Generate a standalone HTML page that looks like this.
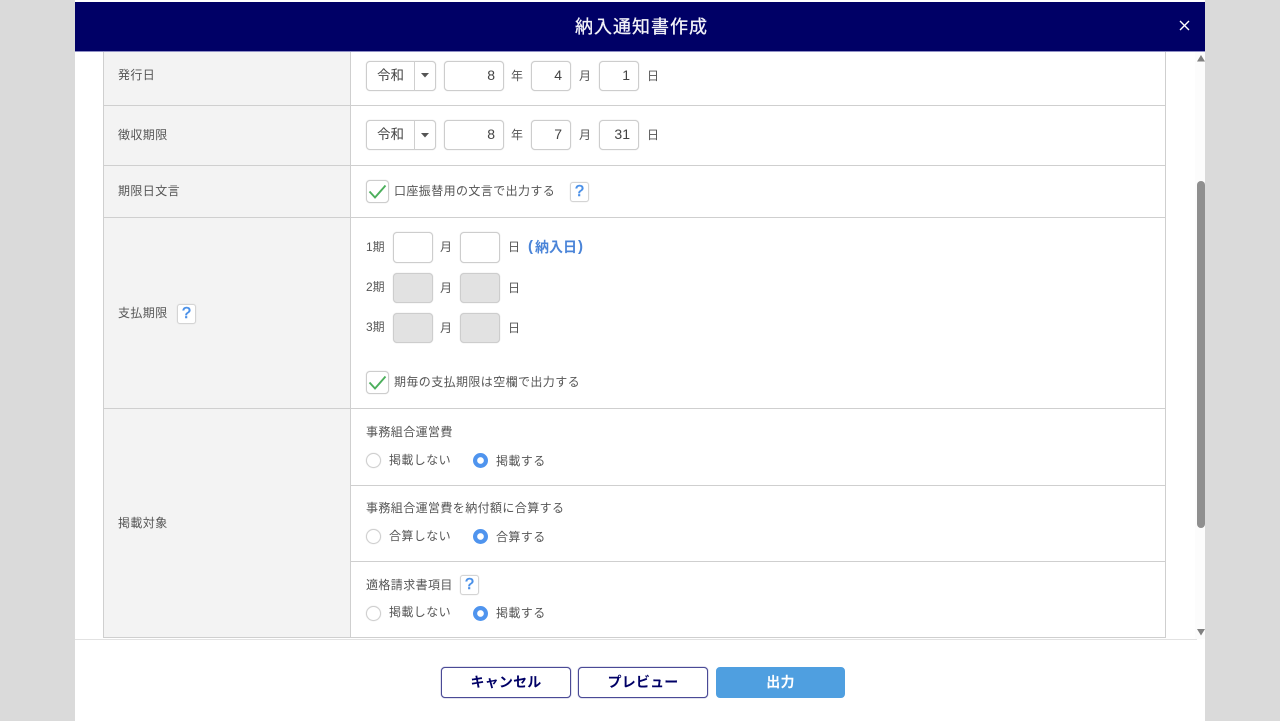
<!DOCTYPE html>
<html lang="ja"><head><meta charset="utf-8"><style>
html,body{margin:0;padding:0;width:1280px;height:721px;overflow:hidden;background:#dadada}
body{position:relative;font-family:"Liberation Sans","Noto Sans CJK JP",sans-serif;color:#555;font-size:12px}
div,span{position:absolute;box-sizing:border-box}
.t{white-space:nowrap;line-height:16px;letter-spacing:.4px}
.i{border:1px solid #cdcdcd;box-shadow:0 0 1px #cdcdcd;border-radius:4px;background:#fff;height:30px;text-align:right;padding-right:8px;line-height:27px;font-size:14px;color:#444;letter-spacing:0}
.d{background:#e2e2e2;border-color:#cdcdcd}
.l{background:#cfcfcf}
.c{width:23px;height:23px;border:1px solid #cdcdcd;box-shadow:0 0 1px #cdcdcd;border-radius:4px;background:#fff;left:366px}
.c svg{position:absolute;left:1px;top:1px}
.h{width:19px;height:20px;border:1px solid #d4d4d4;box-shadow:0 0 1px #d4d4d4;border-radius:3px;background:#fff;color:#4a90e8;font-size:16px;-webkit-text-stroke:.6px #4a90e8;text-align:center;line-height:18px}
.r{width:15px;height:15px;border-radius:50%;border:1px solid #cfcfcf;box-shadow:0 0 1px #cfcfcf;background:#fff;left:366px}
.o{width:15px;height:15px;border-radius:50%;background:radial-gradient(circle,#fff 3px,#4f94ee 3.6px);left:473px}
.b{top:667px;height:31px;border:1px solid #4a4a96;box-shadow:0 0 1px #4a4a96;border-radius:4px;background:#fff;color:#000066;font-weight:bold;font-size:14px;text-align:center;line-height:29px;letter-spacing:.2px}
</style></head><body>
<div style="left:75px;top:0;width:1130px;height:721px;background:#fff"></div>
<div style="left:75px;top:2px;width:1130px;height:50px;background:#000066;border-bottom:1px solid #8f8fc4"></div>
<div class="t" style="left:575px;top:15px;width:140px;color:#f2f2f8;font-size:18px;line-height:24px;letter-spacing:1px;-webkit-text-stroke:.3px #f2f2f8">納入通知書作成</div>
<svg style="position:absolute;left:1178px;top:19px" width="13" height="13"><path d="M2 2L11 11M11 2L2 11" stroke="#fff" stroke-width="1.4"/></svg>

<div style="left:104px;top:52px;width:246px;height:585px;background:#f3f3f3"></div>
<div class="l" style="left:103px;top:52px;width:1px;height:586px"></div>
<div class="l" style="left:350px;top:52px;width:1px;height:586px"></div>
<div class="l" style="left:1165px;top:52px;width:1px;height:586px"></div>
<div class="l" style="left:103px;top:105px;width:1063px;height:1px"></div>
<div class="l" style="left:103px;top:165px;width:1063px;height:1px"></div>
<div class="l" style="left:103px;top:217px;width:1063px;height:1px"></div>
<div class="l" style="left:103px;top:408px;width:1063px;height:1px"></div>
<div class="l" style="left:351px;top:485px;width:815px;height:1px"></div>
<div class="l" style="left:351px;top:561px;width:815px;height:1px"></div>
<div class="l" style="left:103px;top:637px;width:1063px;height:1px"></div>
<div style="left:75px;top:639px;width:1122px;height:1px;background:#e2e2e2"></div>

<div class="t" style="left:118px;top:67px">発行日</div>
<div class="t" style="left:118px;top:127px">徴収期限</div>
<div class="t" style="left:118px;top:183px">期限日文言</div>
<div class="t" style="left:118px;top:305px">支払期限</div>
<div class="h" style="left:177px;top:304px">?</div>
<div class="t" style="left:118px;top:515px">掲載対象</div>

<div class="i" style="left:366px;top:61px;width:70px;text-align:left;padding-left:10px;font-size:13.5px">令和</div>
<div class="l" style="left:414px;top:61px;width:1px;height:30px"></div>
<svg style="position:absolute;left:421px;top:73px" width="9" height="5"><path d="M0 0H8L4 4.5Z" fill="#555"/></svg>
<div class="i" style="left:444px;top:61px;width:60px">8</div>
<div class="t" style="left:511px;top:68px">年</div>
<div class="i" style="left:531px;top:61px;width:40px">4</div>
<div class="t" style="left:579px;top:68px">月</div>
<div class="i" style="left:599px;top:61px;width:40px">1</div>
<div class="t" style="left:647px;top:68px">日</div>

<div class="i" style="left:366px;top:120px;width:70px;text-align:left;padding-left:10px;font-size:13.5px">令和</div>
<div class="l" style="left:414px;top:120px;width:1px;height:30px"></div>
<svg style="position:absolute;left:421px;top:133px" width="9" height="5"><path d="M0 0H8L4 4.5Z" fill="#555"/></svg>
<div class="i" style="left:444px;top:120px;width:60px">8</div>
<div class="t" style="left:511px;top:127px">年</div>
<div class="i" style="left:531px;top:120px;width:40px">7</div>
<div class="t" style="left:579px;top:127px">月</div>
<div class="i" style="left:599px;top:120px;width:40px">31</div>
<div class="t" style="left:647px;top:127px">日</div>

<div class="c" style="top:180px"><svg width="19" height="19"><path d="M1.5 9.5L7 15.5L17.5 3.5" fill="none" stroke="#4caf5c" stroke-width="1.9"/></svg></div>
<div class="t" style="left:394px;top:183px">口座振替用の文言で出力する</div>
<div class="h" style="left:570px;top:182px">?</div>

<div class="t" style="left:366px;top:239px;letter-spacing:0">1期</div>
<div class="i" style="left:393px;top:232px;width:40px;height:31px"></div>
<div class="t" style="left:440px;top:239px">月</div>
<div class="i" style="left:460px;top:232px;width:40px;height:31px"></div>
<div class="t" style="left:508px;top:239px">日</div>
<div class="t" style="left:528px;top:239px;color:#4a84d8;font-weight:bold;font-size:15px;letter-spacing:0">(</div>
<div class="t" style="left:535px;top:239px;color:#4a84d8;font-weight:bold;font-size:14px;letter-spacing:0">納入日</div>
<div class="t" style="left:578px;top:239px;color:#4a84d8;font-weight:bold;font-size:15px;letter-spacing:0">)</div>

<div class="t" style="left:366px;top:279px;letter-spacing:0">2期</div>
<div class="i d" style="left:393px;top:273px;width:40px"></div>
<div class="t" style="left:440px;top:280px">月</div>
<div class="i d" style="left:460px;top:273px;width:40px"></div>
<div class="t" style="left:508px;top:280px">日</div>

<div class="t" style="left:366px;top:319px;letter-spacing:0">3期</div>
<div class="i d" style="left:393px;top:313px;width:40px"></div>
<div class="t" style="left:440px;top:320px">月</div>
<div class="i d" style="left:460px;top:313px;width:40px"></div>
<div class="t" style="left:508px;top:320px">日</div>

<div class="c" style="top:371px"><svg width="19" height="19"><path d="M1.5 9.5L7 15.5L17.5 3.5" fill="none" stroke="#4caf5c" stroke-width="1.9"/></svg></div>
<div class="t" style="left:394px;top:374px">期毎の支払期限は空欄で出力する</div>

<div class="t" style="left:366px;top:424px">事務組合運営費</div>
<div class="r" style="top:453px"></div>
<div class="t" style="left:389px;top:452px">掲載しない</div>
<div class="o" style="top:453px"></div>
<div class="t" style="left:496px;top:453px">掲載する</div>

<div class="t" style="left:366px;top:500px">事務組合運営費を納付額に合算する</div>
<div class="r" style="top:529px"></div>
<div class="t" style="left:389px;top:528px">合算しない</div>
<div class="o" style="top:529px"></div>
<div class="t" style="left:496px;top:529px">合算する</div>

<div class="t" style="left:366px;top:577px">適格請求書項目</div>
<div class="h" style="left:460px;top:575px">?</div>
<div class="r" style="top:606px"></div>
<div class="t" style="left:389px;top:604px">掲載しない</div>
<div class="o" style="top:606px"></div>
<div class="t" style="left:496px;top:605px">掲載する</div>

<div style="left:1195px;top:52px;width:10px;height:587px;background:#fcfcfc"></div>
<svg style="position:absolute;left:1197px;top:55px" width="8" height="7"><path d="M4 0L8 6.5H0Z" fill="#808080"/></svg>
<div style="left:1197px;top:181px;width:8px;height:347px;background:#8f8f8f;border-radius:4px"></div>
<svg style="position:absolute;left:1197px;top:629px" width="8" height="7"><path d="M0 0H8L4 6.5Z" fill="#808080"/></svg>

<div class="b" style="left:441px;width:130px">キャンセル</div>
<div class="b" style="left:578px;width:130px">プレビュー</div>
<div class="b" style="left:716px;width:129px;background:#4f9fe0;border-color:#4f9fe0;box-shadow:none;color:#fff">出力</div>
</body></html>
